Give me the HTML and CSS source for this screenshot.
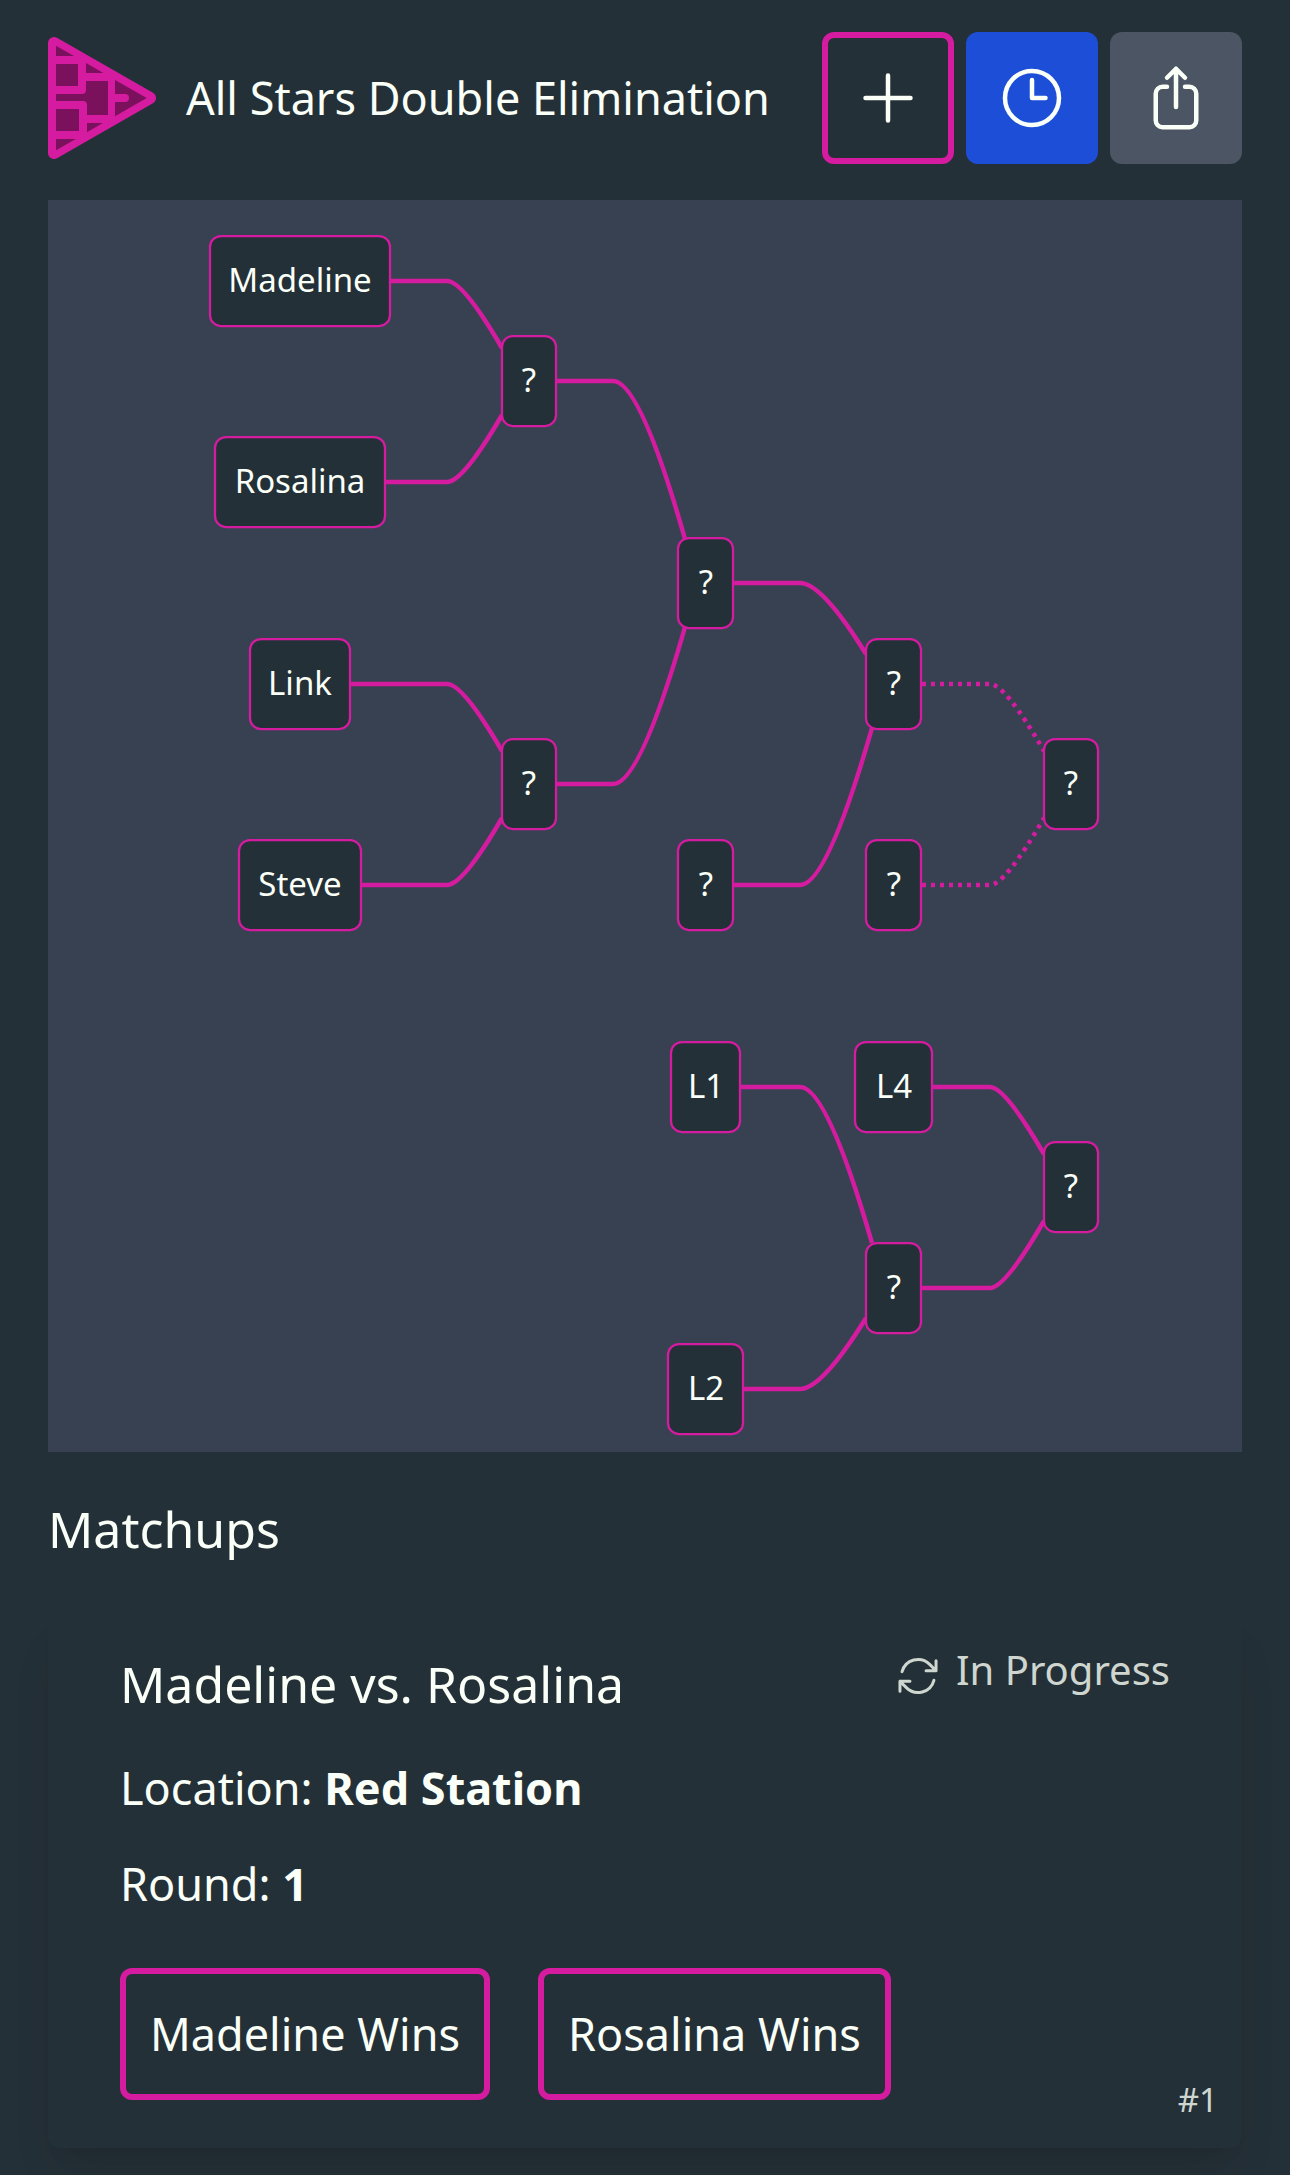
FILE: index.html
```html
<!DOCTYPE html>
<html lang="en">
<head>
<meta charset="utf-8">
<meta name="viewport" content="width=device-width, initial-scale=1">
<title>All Stars Double Elimination</title>
<link rel="stylesheet" href="styles.css">
</head>
<body>
<header class="topbar">
  <a class="logo" href="#" aria-label="Home">
    <svg width="108" height="122" viewBox="0 0 108 122" aria-hidden="true">
      <path class="logo-frame" d="M6 6L102 61L6 116Z"/>
      <g class="logo-cell">
        <path d="M8 8.700L26 19H8Z"/>
        <path d="M8 27H30V49H8Z"/>
        <path d="M38 26L55.300 36H38Z"/>
        <path d="M8 57H34Q38 57 38 53V44H60V78H39V68Q39 64 35 64H8Z"/>
        <path d="M67 43L98.700 61L67 79.300V65H77A4 4 0 0 0 77 57H67Z"/>
        <path d="M8 72H31V94H8Z"/>
        <path d="M39 86H54.700L39 95.300Z"/>
        <path d="M8 102H27.700L8 113.300Z"/>
      </g>
    </svg>
  </a>
  <h1 class="title">All Stars Double Elimination</h1>
  <div class="actions">
    <button class="icon-button icon-button-outline" type="button" aria-label="Add">
      <svg class="icon" viewBox="0 0 24 24" aria-hidden="true"><path d="M12 4.500v15m7.500-7.500h-15"/></svg>
    </button>
    <button class="icon-button icon-button-blue" type="button" aria-label="History">
      <svg class="icon" viewBox="0 0 24 24" aria-hidden="true"><path d="M12 6v6h4.500m4.500 0a9 9 0 11-18 0 9 9 0 0118 0z"/></svg>
    </button>
    <button class="icon-button icon-button-gray" type="button" aria-label="Share">
      <svg class="icon" viewBox="0 0 24 24" aria-hidden="true"><path d="M9 8.250H7.500a2.250 2.250 0 00-2.250 2.250v9a2.250 2.250 0 002.250 2.250h9a2.250 2.250 0 002.250-2.250v-9a2.250 2.250 0 00-2.250-2.250H15m0-3l-3-3m0 0l-3 3m3-3V15"/></svg>
    </button>
  </div>
</header>

<main class="content">
  <svg class="bracket" viewBox="0 0 1194 1252" role="img" aria-label="Tournament bracket">
    <g class="edges">
      <path d="M252 81H399Q415 81 454 148"/>
      <path d="M252 282H399Q415 282 454 215"/>
      <path d="M252 484H399Q415 484 454 551"/>
      <path d="M252 685H399Q415 685 454 618"/>
      <path d="M481 181H565Q592 181 637 339"/>
      <path d="M481 584H565Q592 584 637 427"/>
      <path d="M658 383H752Q774 383 818 454"/>
      <path d="M658 685H752Q779 685 824 528"/>
      <path class="edge-dotted" d="M874 484H942Q957 484 996 551"/>
      <path class="edge-dotted" d="M874 685H942Q957 685 996 618"/>
      <path d="M658 887H752Q779 887 824 1043"/>
      <path d="M658 1189H752Q774 1189 818 1118"/>
      <path d="M846 887H942Q957 887 996 954"/>
      <path d="M846 1088H942Q957 1088 996 1021"/>
    </g>
    <g class="nodes">
      <rect x="162" y="36" width="180" height="90" rx="11"/><text x="252" y="92">Madeline</text>
      <rect x="167" y="237" width="170" height="90" rx="11"/><text x="252" y="293">Rosalina</text>
      <rect x="202" y="439" width="100" height="90" rx="11"/><text x="252" y="495">Link</text>
      <rect x="191" y="640" width="122" height="90" rx="11"/><text x="252" y="696">Steve</text>
      <rect x="454" y="136" width="54" height="90" rx="11"/><text x="481" y="192">?</text>
      <rect x="454" y="539" width="54" height="90" rx="11"/><text x="481" y="595">?</text>
      <rect x="630" y="338" width="55" height="90" rx="11"/><text x="658" y="394">?</text>
      <rect x="630" y="640" width="55" height="90" rx="11"/><text x="658" y="696">?</text>
      <rect x="818" y="439" width="55" height="90" rx="11"/><text x="846" y="495">?</text>
      <rect x="818" y="640" width="55" height="90" rx="11"/><text x="846" y="696">?</text>
      <rect x="996" y="539" width="54" height="90" rx="11"/><text x="1023" y="595">?</text>
      <rect x="623" y="842" width="69" height="90" rx="11"/><text x="658" y="898">L1</text>
      <rect x="807" y="842" width="77" height="90" rx="11"/><text x="846" y="898">L4</text>
      <rect x="620" y="1144" width="75" height="90" rx="11"/><text x="658" y="1200">L2</text>
      <rect x="818" y="1043" width="55" height="90" rx="11"/><text x="846" y="1099">?</text>
      <rect x="996" y="942" width="54" height="90" rx="11"/><text x="1023" y="998">?</text>
    </g>
  </svg>

  <h2 class="section-title">Matchups</h2>

  <article class="card">
    <div class="card-head">
      <h3 class="card-title">Madeline vs. Rosalina</h3>
      <p class="status">
        <svg class="status-icon" viewBox="0 0 24 24" aria-hidden="true"><path d="M16.023 9.348h4.992v-.001M2.985 19.644v-4.992m0 0h4.992m-4.993 0l3.181 3.183a8.250 8.250 0 0013.803-3.700M4.031 9.865a8.250 8.250 0 0113.803-3.700l3.181 3.182m0-4.991v4.990"/></svg>
        <span>In Progress</span>
      </p>
    </div>
    <p class="detail">Location: <strong>Red Station</strong></p>
    <p class="detail">Round: <strong>1</strong></p>
    <div class="card-actions">
      <button class="win-button" type="button">Madeline Wins</button>
      <button class="win-button" type="button">Rosalina Wins</button>
    </div>
    <span class="card-number">#1</span>
  </article>
</main>
</body>
</html>
```
FILE: styles.css
```css
:root {
  --bg: #243037;
  --panel: #384151;
  --pink: #d51ba0;
  --pink-dark: #7b105d;
  --text: #fafff7;
  --muted: #ced6cf;
}

* {
  box-sizing: border-box;
}

body {
  margin: 0;
  min-height: 100vh;
  background: var(--bg);
  color: var(--text);
  font-family: "Noto Sans", "Open Sans", sans-serif;
  font-size: 45px;
  line-height: 72px;
}

h1,
h2,
h3,
p {
  margin: 0;
  font-weight: 400;
}

button {
  color: inherit;
  font: inherit;
  cursor: pointer;
}

.topbar {
  display: flex;
  align-items: center;
  padding: 32px 48px 36px;
}

.logo {
  display: flex;
  flex: none;
  margin-right: 30px;
}

.logo-frame {
  fill: var(--pink);
  stroke: var(--pink);
  stroke-width: 12;
  stroke-linejoin: round;
}

.logo-cell {
  fill: var(--pink-dark);
}

.title {
  flex: 1;
  font-size: 45px;
}

.actions {
  display: flex;
  gap: 12px;
}

.icon-button {
  display: flex;
  align-items: center;
  justify-content: center;
  width: 132px;
  height: 132px;
  padding: 0;
  border: 0;
  border-radius: 12px;
}

.icon-button-outline {
  border: 6px solid var(--pink);
  background: none;
}

.icon-button-blue {
  background: #1d4ed8;
}

.icon-button-gray {
  background: #4b5563;
}

.icon,
.status-icon {
  flex: none;
  fill: none;
  stroke: currentColor;
  stroke-width: 1.5;
  stroke-linecap: round;
  stroke-linejoin: round;
}

.icon {
  width: 72px;
  height: 72px;
}

.content {
  padding: 0 48px 27px;
}

.bracket {
  display: block;
  width: 100%;
  height: auto;
  background: var(--panel);
}

.edges {
  fill: none;
  stroke: var(--pink);
  stroke-width: 4.5;
}

.edge-dotted {
  stroke-dasharray: 4 5;
}

.nodes rect {
  fill: var(--bg);
  stroke: var(--pink);
  stroke-width: 2.25;
}

.nodes text {
  fill: var(--text);
  font-size: 33px;
  text-anchor: middle;
}

.section-title {
  margin: 41px 0 51px;
  font-size: 50px;
}

.card {
  position: relative;
  padding: 24px 72px 48px;
  border-radius: 12px;
  background: var(--bg);
  box-shadow: 0 30px 45px -9px rgb(0 0 0 / 10%), 0 12px 18px -12px rgb(0 0 0 / 10%);
}

.card-head {
  display: flex;
  align-items: flex-start;
  justify-content: space-between;
  gap: 24px;
}

.card-title {
  font-size: 50px;
  line-height: 88px;
}

.status {
  display: flex;
  align-items: flex-end;
  gap: 14px;
  color: var(--muted);
  font-size: 40px;
  line-height: 60px;
}

.status-icon {
  width: 48px;
  height: 48px;
}

.detail {
  margin-top: 24px;
}

.card-actions {
  display: flex;
  flex-wrap: wrap;
  gap: 48px;
  margin-top: 48px;
}

.win-button {
  height: 132px;
  padding: 0 24px;
  border: 6px solid var(--pink);
  border-radius: 12px;
  background: none;
}

.card-number {
  position: absolute;
  right: 24px;
  bottom: 24px;
  color: var(--muted);
  font-size: 33px;
  line-height: 48px;
}
```
